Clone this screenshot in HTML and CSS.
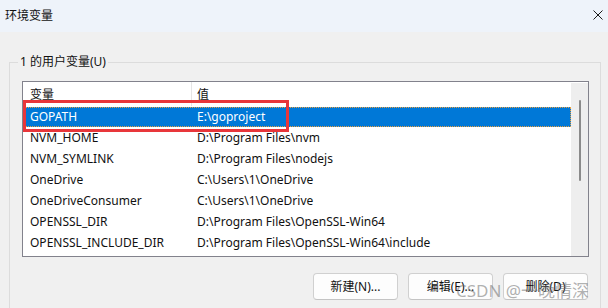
FILE: index.html
```html
<!DOCTYPE html>
<html lang="zh-CN">
<head>
<meta charset="utf-8">
<title>环境变量</title>
<link rel="stylesheet" href="styles.css">
</head>
<body>
<div class="dialog">
  <div class="titlebar">
    <span class="title">环境变量</span>
    <svg class="close" width="10" height="10" viewBox="0 0 10 10"><path d="M0.5 0.5L9.5 9.5M9.5 0.5L0.5 9.5" stroke="#1a1a1a" stroke-width="1" fill="none"/></svg>
  </div>
  <fieldset class="group">
    <legend class="group-label">1 的用户变量(U)</legend>
    <div class="listbox">
      <div class="list">
        <div class="row header"><span class="c1">变量</span><span class="c2">值</span></div>
        <div class="row selected"><span class="c1">GOPATH</span><span class="c2">E:\goproject</span></div>
        <div class="row"><span class="c1">NVM_HOME</span><span class="c2">D:\Program Files\nvm</span></div>
        <div class="row"><span class="c1">NVM_SYMLINK</span><span class="c2">D:\Program Files\nodejs</span></div>
        <div class="row"><span class="c1">OneDrive</span><span class="c2">C:\Users\1\OneDrive</span></div>
        <div class="row"><span class="c1">OneDriveConsumer</span><span class="c2">C:\Users\1\OneDrive</span></div>
        <div class="row"><span class="c1">OPENSSL_DIR</span><span class="c2">D:\Program Files\OpenSSL-Win64</span></div>
        <div class="row"><span class="c1">OPENSSL_INCLUDE_DIR</span><span class="c2">D:\Program Files\OpenSSL-Win64\include</span></div>
      </div>
      <div class="scrollbar"><div class="thumb"></div></div>
      <div class="highlight"></div>
    </div>
    <div class="buttons">
      <button class="btn">新建(N)...</button>
      <button class="btn">编辑(E)...</button>
      <button class="btn">删除(D)</button>
    </div>
  </fieldset>
  <div class="watermark">CSDN @一晚情深</div>
</div>
</body>
</html>
```

FILE: styles.css
```css
html, body {
  margin: 0;
  padding: 0;
}
body {
  width: 608px;
  height: 308px;
  overflow: hidden;
  background: #f0f0f0;
  font-family: "Noto Sans", "Noto Sans CJK SC", sans-serif;
  font-size: 12px;
  color: #111111;
}
.dialog {
  position: relative;
  width: 608px;
  height: 308px;
  overflow: hidden;
}
.titlebar {
  height: 32px;
  background: #eef3fa;
  display: flex;
  align-items: center;
  padding: 0 5px;
  box-sizing: border-box;
}
.title {
  font-family: "Noto Sans CJK SC", sans-serif;
  font-size: 12px;
  line-height: 16px;
  margin-top: -3px;
}
.close {
  margin-left: auto;
  margin-top: -2px;
}
.group {
  margin: 22px 0 0 9px;
  width: 592px;
  height: 254px;
  box-sizing: border-box;
  border: 1px solid #dcdcdc;
  border-bottom: none;
  padding: 0 11px 0 12px;
  min-width: 0;
}
.group-label {
  padding: 0 2px;
  margin-left: -4px;
  line-height: 16px;
  font-size: 12px;
  font-family: "Noto Sans", "Noto Sans CJK SC", sans-serif;
}
.listbox {
  position: relative;
  margin-top: 11px;
  height: 176px;
  width: 567px;
  box-sizing: border-box;
  border: 1px solid #82828c;
  background: #ffffff;
  display: flex;
}
.list {
  flex: 1;
  display: flex;
  flex-direction: column;
}
.row {
  display: flex;
  height: 21px;
  align-items: center;
  line-height: 16px;
  white-space: nowrap;
}
.row.header {
  height: 24px;
}
.c1 {
  width: 169px;
  padding-left: 7px;
  box-sizing: border-box;
  flex: none;
}
.c2 {
  padding-left: 5px;
}
.header .c1 {
  align-self: stretch;
  display: flex;
  align-items: center;
  border-right: 1px solid #e5e5e5;
  font-family: "Noto Sans CJK SC", sans-serif;
}
.header .c2 {
  font-family: "Noto Sans CJK SC", sans-serif;
}
.row.selected {
  background: #0078d7;
  color: #ffffff;
  outline: 1px dotted #e8a040;
  outline-offset: -1px;
  height: 20px;
  margin-top: 1px;
}
.scrollbar {
  width: 17px;
  margin-top: 1px;
  background: #eeeeee;
  display: flex;
  justify-content: center;
  flex: none;
}
.thumb {
  width: 2px;
  height: 81px;
  margin-top: 17px;
  background: #8a8a8a;
  border-radius: 1px;
}
.highlight {
  position: absolute;
  left: 0;
  top: 18px;
  width: 266px;
  height: 32px;
  box-sizing: border-box;
  border: 3px solid #e8363a;
}
.buttons {
  display: flex;
  justify-content: flex-end;
  gap: 10px;
  margin-top: 16px;
  margin-right: 1px;
}
.btn {
  width: 85px;
  height: 27px;
  box-sizing: border-box;
  border: 1px solid #d0d0d0;
  border-bottom-color: #c4c4c4;
  border-radius: 4px;
  background: #fdfdfd;
  font-family: "Noto Sans", "Noto Sans CJK SC", sans-serif;
  font-size: 12px;
  color: #111111;
  padding: 0;
  line-height: 16px;
}
.watermark {
  position: absolute;
  left: 456px;
  top: 280px;
  font-family: "Noto Sans", "Noto Sans CJK SC", sans-serif;
  font-size: 17px;
  line-height: 22px;
  color: rgba(110, 110, 110, 0.55);
  white-space: nowrap;
}
```
